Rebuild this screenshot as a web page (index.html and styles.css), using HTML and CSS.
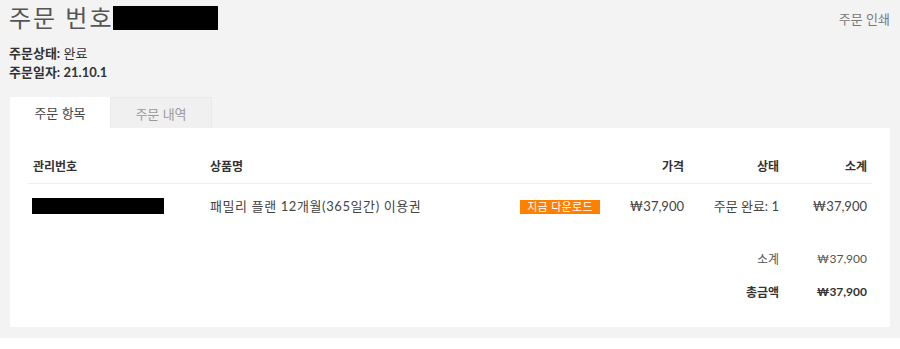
FILE: index.html
```html
<!DOCTYPE html>
<html lang="ko">
<head>
<meta charset="utf-8">
<title>주문 번호</title>
<link rel="stylesheet" href="styles.css">
</head>
<body>
<div class="page">
  <div class="head">
    <h1 class="title">주문 번호<span class="redact redact-title"></span></h1>
    <a class="print">주문 인쇄</a>
  </div>
  <div class="meta">
    <div><b>주문상태:</b> 완료</div>
    <div><b>주문일자:</b> <b>21.10.1</b></div>
  </div>
  <div class="tabs">
    <div class="tab active">주문 항목</div>
    <div class="tab">주문 내역</div>
  </div>
  <div class="panel">
    <table class="items">
      <colgroup>
        <col class="c1"><col class="c2"><col class="c3"><col class="c4"><col class="c5"><col class="c6">
      </colgroup>
      <thead>
        <tr>
          <th class="l">관리번호</th>
          <th class="l">상품명</th>
          <th></th>
          <th class="r">가격</th>
          <th class="r">상태</th>
          <th class="r">소계</th>
        </tr>
      </thead>
      <tbody>
        <tr>
          <td class="l"><span class="redact redact-row"></span></td>
          <td class="l name">패밀리 플랜 12개월(365일간) 이용권</td>
          <td class="l btncell"><span class="dl">지금 다운로드</span></td>
          <td class="r price">₩37,900</td>
          <td class="r state">주문 완료: 1</td>
          <td class="r price">₩37,900</td>
        </tr>
      </tbody>
      <tfoot>
        <tr class="sub">
          <td colspan="4"></td>
          <td class="r">소계</td>
          <td class="r">₩37,900</td>
        </tr>
        <tr class="total">
          <td colspan="4"></td>
          <td class="r">총금액</td>
          <td class="r">₩37,900</td>
        </tr>
      </tfoot>
    </table>
  </div>
</div>
</body>
</html>
```
FILE: styles.css
```css
html, body {
  margin: 0;
  padding: 0;
  background: #ffffff;
  font-family: Lato, "Noto Sans CJK KR", sans-serif;
  color: #333;
}
.page {
  background: #f3f3f3;
  height: 338px;
  padding: 0 10px 0 10px;
  box-sizing: border-box;
}
.head {
  display: flex;
  justify-content: space-between;
  align-items: center;
  height: 36px;
}
.title {
  margin: 0 0 0 -1px;
  font-size: 24px;
  font-weight: 400;
  color: #555;
  display: flex;
  align-items: center;
  line-height: 36px;
  letter-spacing: 2px;
}
.redact {
  display: inline-block;
  background: #000;
}
.redact-title {
  width: 105px;
  height: 24px;
  margin-left: 0;
}
.print {
  font-size: 13px;
  color: #777;
  margin-top: 1px;
}
.meta {
  margin-top: 8px;
  font-size: 13px;
  line-height: 19px;
  color: #333;
  margin-left: -1px;
}
.meta b {
  font-weight: 700;
}
.tabs {
  display: flex;
  margin-top: 15px;
  height: 31px;
}
.tab {
  display: flex;
  align-items: center;
  justify-content: center;
  font-size: 13px;
  color: #999;
  background: #f0f0f0;
  box-sizing: border-box;
  border: 1px solid #e9e9e9;
  border-bottom: none;
  width: 102px;
}
.tab.active {
  width: 100px;
  background: #fff;
  color: #444;
  border: none;
}
.panel {
  background: #fff;
  height: 199px;
  padding: 20px 17px 0 18px;
  box-sizing: border-box;
}
.items {
  width: 844px;
  table-layout: fixed;
  border-collapse: collapse;
}
.c1 { width: 177px; }
.c2 { width: 295px; }
.c3 { width: 110px; }
.c4 { width: 79px; }
.c5 { width: 95px; }
.c6 { width: 88px; }
.items th, .items td {
  padding: 0 5px;
}
.items th {
  height: 35px;
  font-size: 12px;
  font-weight: 700;
  color: #333;
  border-bottom: 1px solid #eeeeee;
}
.l { text-align: left; }
.r { text-align: right; }
.items tbody td {
  height: 43px;
  font-size: 13px;
  color: #444;
}
.redact-row {
  width: 132px;
  height: 16px;
  vertical-align: middle;
  margin-left: -1px;
}
.name {
  color: #444;
  white-space: nowrap;
  letter-spacing: 0.6px;
}
.btncell {
  padding-left: 20px !important;
}
.dl {
  display: inline-block;
  background: #ff8000;
  color: #fff;
  font-size: 11px;
  line-height: 14px;
  width: 80px;
  text-align: center;
  vertical-align: middle;
  letter-spacing: 0.3px;
}
.price {
  color: #444;
}
.state {
  font-size: 13px;
}
.items tfoot td {
  font-size: 12px;
  color: #555;
  height: 33px;
}
.items tfoot tr.sub td {
  padding-top: 15px;
  height: 33px;
}
.items tfoot tr.total td {
  font-weight: 700;
  color: #333;
}
```
